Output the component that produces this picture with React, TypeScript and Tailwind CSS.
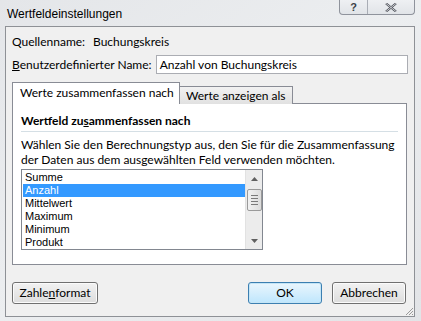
import React from 'react';

const items = ['Summe', 'Anzahl', 'Mittelwert', 'Maximum', 'Minimum', 'Produkt'];

const titleFont = { fontFamily: '"Liberation Sans", Arial, sans-serif' };
const bodyFont = { fontFamily: 'Lato, "Liberation Sans", Arial, sans-serif' };

function TitleButtons() {
  return (
    <div className="flex h-[15px] border border-t-0 border-[#8f939c] rounded-b-[4px] bg-gradient-to-b from-[#eef0f3] to-[#e1e4e8] overflow-hidden">
      <div className="w-[28px] flex items-center justify-center border-r border-[#a9adb5]">
        <span className="text-[11px] leading-none text-[#3b3f46] font-bold">?</span>
      </div>
      <div className="w-[46px] flex items-center justify-center">
        <svg width="12" height="9" viewBox="0 0 12 9">
          <path d="M1 0.5 L11 8.5 M11 0.5 L1 8.5" stroke="#4a4e56" strokeWidth="2.2" />
          <path d="M1 0.5 L11 8.5 M11 0.5 L1 8.5" stroke="#e8eaee" strokeWidth="0.8" />
        </svg>
      </div>
    </div>
  );
}

function ScrollBar() {
  return (
    <div className="w-[17px] bg-[#ececec] flex flex-col items-center border-l border-[#e2e2e2]">
      <div className="h-[17px] flex items-center justify-center">
        <svg width="7" height="4" viewBox="0 0 7 4"><path d="M3.5 0 L7 4 L0 4 Z" fill="#606060" /></svg>
      </div>
      <div className="mt-[2px] w-[15px] h-[22px] rounded-[2px] border border-[#9a9a9a] bg-gradient-to-r from-[#f2f2f2] to-[#dcdcdc] flex flex-col items-center justify-center gap-[2px]">
        <div className="w-[7px] h-px bg-[#7a7a7a]" />
        <div className="w-[7px] h-px bg-[#7a7a7a]" />
        <div className="w-[7px] h-px bg-[#7a7a7a]" />
        <div className="w-[7px] h-px bg-[#7a7a7a]" />
      </div>
      <div className="flex-1" />
      <div className="h-[17px] flex items-center justify-center">
        <svg width="7" height="4" viewBox="0 0 7 4"><path d="M0 0 L7 0 L3.5 4 Z" fill="#606060" /></svg>
      </div>
    </div>
  );
}

function Button({ children, w, primary }: { children: React.ReactNode; w: string; primary?: boolean }) {
  return (
    <button
      className={`${w} h-[22px] rounded-[3px] border text-[12px] text-black flex items-center justify-center ${
        primary
          ? 'border-[#3c7fb1] bg-gradient-to-b from-[#eaf6fd] to-[#bee6fd] shadow-[inset_0_0_0_1px_#c4e5f6]'
          : 'border-[#707070] bg-gradient-to-b from-[#f2f2f2] to-[#dddddd] shadow-[inset_0_0_0_1px_#fbfbfb]'
      }`}
    >
      {children}
    </button>
  );
}

export default function App() {
  return (
    <div className="w-[421px] h-[321px] flex flex-col bg-gradient-to-br from-[#e4e6e9] via-[#eceef0] to-[#e2e4e7] overflow-hidden">
      {/* Titelleiste */}
      <div className="h-[26px] flex items-start justify-between pl-[7px] pr-[6px]" style={titleFont}>
        <span className="mt-[5px] text-[12px] text-black">Wertfeldeinstellungen</span>
        <TitleButtons />
      </div>

      {/* Dialoginhalt */}
      <div
        className="ml-[5px] mr-[6px] h-[291px] border border-[#8e9196] bg-[#f0f0f0] flex flex-col px-[6px] relative text-[12px] text-black whitespace-nowrap"
        style={bodyFont}
      >
        <div className="mt-[7px] h-[15px] flex items-center">
          <span className="w-[81px]">Quellenname:</span>
          <span>Buchungskreis</span>
        </div>

        <div className="mt-[6px] h-[19px] flex items-center">
          <span className="w-[144px]">
            <span className="underline">B</span>enutzerdefinierter Name:
          </span>
          <div className="w-[253px] h-[19px] bg-white border border-[#abadb3] flex items-center px-[3px]">
            Anzahl von Buchungskreis
          </div>
        </div>

        {/* Register */}
        <div className="mt-[8px] flex items-end h-[22px] relative z-10">
          <div className="w-[168px] h-[22px] bg-white border border-b-0 border-[#898c95] flex items-center pl-[7px] pb-[1px]">
            Werte zusammenfassen nach
          </div>
          <div className="w-[113px] h-[18px] border border-l-0 border-b-0 border-[#898c95] bg-gradient-to-b from-[#f2f2f2] to-[#e1e1e1] flex items-center pl-[6px]">
            Werte anzeigen als
          </div>
        </div>

        <div className="w-[395px] h-[162px] -mt-px bg-white border border-[#898c95] flex flex-col px-[8px]">
          <div className="mt-[9px] font-bold h-[15px] flex items-center">
            Wertfeld zu<span className="underline">s</span>ammenfassen nach
          </div>
          <div className="mt-[3px] h-px bg-[#d5dfe5]" />
          <div className="mt-[5px] leading-[15px]">
            Wählen Sie den Berechnungstyp aus, den Sie für die Zusammenfassung
            <br />
            der Daten aus dem ausgewählten Feld verwenden möchten.
          </div>
          <div className="mt-[2px] w-[242px] h-[81px] border border-[#828790] flex">
            <div className="flex-1 pt-px pl-px text-[11px]" style={titleFont}>
              {items.map((it) => (
                <div
                  key={it}
                  className={`h-[13px] leading-[13px] pl-[2px] ${
                    it === 'Anzahl' ? 'bg-[#3399ff] text-white' : ''
                  }`}
                >
                  {it}
                </div>
              ))}
            </div>
            <ScrollBar />
          </div>
        </div>

        {/* Schaltflächen */}
        <div className="mt-[17px] flex items-center">
          <Button w="w-[86px]">
            Zahle<span className="underline">n</span>format
          </Button>
          <div className="flex-1" />
          <Button w="w-[74px]" primary>
            OK
          </Button>
          <div className="w-[10px]" />
          <Button w="w-[74px]">Abbrechen</Button>
          <div className="w-[2px]" />
        </div>

        <svg className="absolute right-0 bottom-0" width="10" height="10" viewBox="0 0 10 10">
          <path d="M9 2 L2 9 M9 5 L5 9 M9 8 L8 9" stroke="#9a9a9a" strokeWidth="1" />
        </svg>
      </div>
    </div>
  );
}
